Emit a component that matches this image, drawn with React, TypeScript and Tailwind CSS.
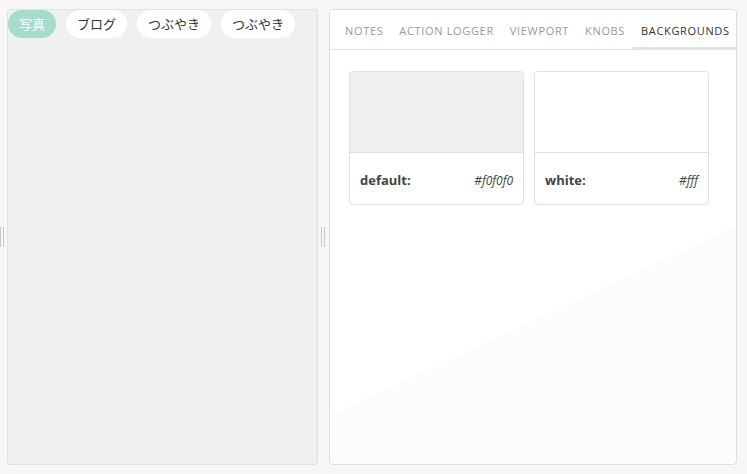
import React from 'react';

const chips = [
  { label: '写真', active: true },
  { label: 'ブログ', active: false },
  { label: 'つぶやき', active: false },
  { label: 'つぶやき', active: false },
];

const tabs = ['Notes', 'Action Logger', 'Viewport', 'Knobs', 'Backgrounds'];

const swatches = [
  { name: 'default:', value: '#f0f0f0', bg: 'bg-[#f0f0f0]' },
  { name: 'white:', value: '#fff', bg: 'bg-white' },
];

const Handle = () => (
  <div className="flex gap-[2px] h-[20px]">
    <div className="w-px h-full bg-[#c6c6c6]" />
    <div className="w-px h-full bg-[#c6c6c6]" />
  </div>
);

export default function App() {
  return (
    <div className="w-[747px] h-[474px] bg-[#f7f7f7] flex py-[9px] font-['Open_Sans',sans-serif] overflow-hidden">
      {/* left gutter */}
      <div className="w-[7px] flex items-center">
        <Handle />
      </div>

      {/* preview */}
      <div className="w-[311px] bg-[#f0f0f0] border border-[#e2e2e2] rounded-[3px] flex flex-col">
        <div className="flex gap-[10px]">
          {chips.map((chip, i) => (
            <span
              key={i}
              className={`h-[28px] px-[11px] rounded-full flex items-center text-[13px] font-['Noto_Sans_CJK_JP',sans-serif] ${
                chip.active ? 'bg-[#a6dccd] text-white' : 'bg-white text-[#333]'
              }`}
            >
              {chip.label}
            </span>
          ))}
        </div>
      </div>

      {/* middle gutter */}
      <div className="w-[11px] flex items-center pl-[3px]">
        <Handle />
      </div>

      {/* addons panel */}
      <div className="w-[408px] border border-[#dedede] rounded-[4px] flex flex-col bg-[linear-gradient(155deg,#ffffff_63%,#fcfcfc_63%)]">
        <div className="h-[40px] flex items-stretch pl-[7px] border-b border-[#e4e4e4] overflow-hidden">
          {tabs.map((tab) => {
            const active = tab === 'Backgrounds';
            return (
              <div
                key={tab}
                className={`px-2 shrink-0 whitespace-nowrap flex items-center uppercase text-[11px] tracking-[0.06em] border-b-[3px] mb-[-1px] pt-[5px] ${
                  active ? 'text-[#333] border-[#e2e2e2]' : 'text-[#999] border-transparent'
                }`}
              >
                {tab}
              </div>
            );
          })}
        </div>

        <div className="pl-[19px] pt-[21px] flex gap-[10px]">
          {swatches.map((s) => (
            <div key={s.name} className="w-[175px] h-[134px] border border-[#e0e0e0] rounded-[4px] overflow-hidden flex flex-col bg-white">
              <div className={`h-[81px] border-b border-[#e0e0e0] ${s.bg}`} />
              <div className="flex-1 flex items-center justify-between px-[10px] pt-[4px] text-[#444]">
                <span className="text-[13px] font-bold">{s.name}</span>
                <span className="text-[12px] italic">{s.value}</span>
              </div>
            </div>
          ))}
        </div>
      </div>
    </div>
  );
}
